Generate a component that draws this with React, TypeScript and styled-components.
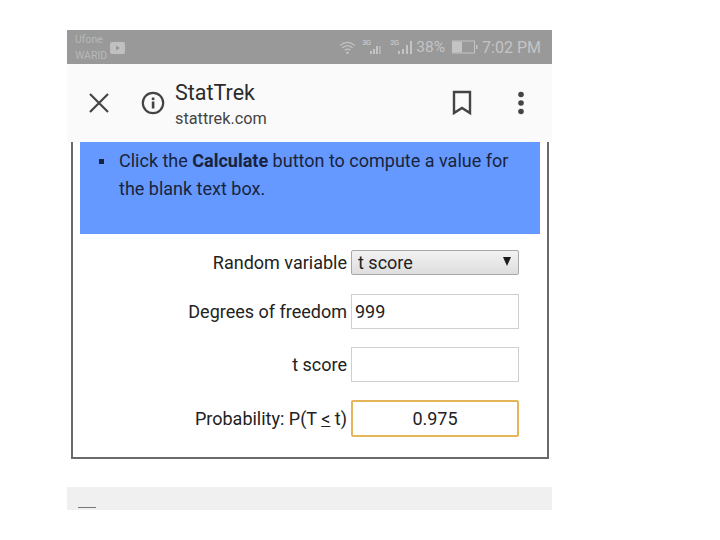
import React from "react";
import styled, { createGlobalStyle } from "styled-components";

const Global = createGlobalStyle`
  html, body { margin: 0; padding: 0; background: #fff; }
  body { font-family: Roboto, "Liberation Sans", sans-serif; }
`;

const Page = styled.div`
  width: 720px;
  height: 540px;
  padding: 30px 0 0 67px;
  box-sizing: border-box;
  overflow: hidden;
`;

const Phone = styled.div`
  width: 485px;
  height: 480px;
  display: flex;
  flex-direction: column;
`;

const StatusBar = styled.div`
  height: 34px;
  flex: none;
  background: #999999;
  color: #c4c4c4;
  display: flex;
  align-items: center;
  justify-content: space-between;
  padding: 0 11px 0 8px;
`;

const Carrier = styled.div`
  display: flex;
  align-items: center;
  gap: 3px;
`;

const CarrierText = styled.div`
  font-size: 10.5px;
  line-height: 16px;
  padding-top: 2px;
  color: #b8b8b8;
`;

const CarrierIcon = styled.svg`
  display: block;
  margin-top: 2px;
`;

const StatusRight = styled.div`
  display: flex;
  align-items: center;
`;

const StatusIcon = styled.svg<{ $left?: number }>`
  display: block;
  flex: none;
  margin-left: ${(p) => p.$left ?? 0}px;
`;

const NetTag = styled.span<{ $left: number }>`
  width: 7px;
  flex: none;
  margin-left: ${(p) => p.$left}px;
  margin-top: 1px;
  align-self: flex-start;
  font-size: 7.5px;
  line-height: 7px;
  letter-spacing: -0.5px;
  font-weight: 500;
  white-space: nowrap;
  color: #c8c8c8;
`;

const Percent = styled.span`
  font-size: 15.5px;
  margin: 0 7px 0 2px;
`;

const Clock = styled.span`
  font-size: 16px;
  margin-left: 4px;
`;

const Header = styled.div`
  height: 78px;
  flex: none;
  background: #fafafa;
  display: flex;
  align-items: center;
  padding: 0 27px 0 21px;
  box-sizing: border-box;
  color: #444;
`;

const TitleBlock = styled.div`
  margin-left: 10px;
  padding-top: 4px;
  flex: 1;
`;

const Title = styled.div`
  font-size: 21.5px;
  line-height: 28px;
  color: #2b2b2b;
`;

const Domain = styled.div`
  font-size: 16.3px;
  line-height: 24px;
  color: #444;
`;

const HeaderIcon = styled.svg`
  display: block;
  flex: none;
`;

const InfoIcon = styled(HeaderIcon)`
  margin-left: 31px;
`;

const BookmarkIcon = styled(HeaderIcon)`
  margin-right: 45px;
`;

const Content = styled.div`
  flex: 1;
  background: #fff;
  padding: 0 3px 0 4px;
`;

const Panel = styled.div`
  height: 317px;
  box-sizing: border-box;
  border: solid #6a6a6a;
  border-width: 0 2px 2px 2px;
  padding: 0 7px 0 7px;
`;

const Notice = styled.div`
  height: 92px;
  background: #6699ff;
  box-sizing: border-box;
  padding: 5px 24px 0 39px;
  font-size: 18px;
  line-height: 28px;
  color: #18233d;
  position: relative;
`;

const Bullet = styled.span`
  position: absolute;
  left: 19px;
  top: 17px;
  width: 5px;
  height: 5px;
  background: #18233d;
`;

const Form = styled.div`
  display: flex;
  flex-direction: column;
`;

const Row = styled.div<{ $top: number; $height: number }>`
  display: flex;
  align-items: center;
  justify-content: flex-end;
  margin-top: ${(p) => p.$top}px;
  height: ${(p) => p.$height}px;
  padding-right: 21px;
`;

const Label = styled.div`
  font-size: 18px;
  color: #222;
  margin-right: 4px;
  white-space: nowrap;
`;

const Under = styled.span`
  text-decoration: underline;
`;

const SelectBox = styled.div`
  width: 168px;
  height: 100%;
  box-sizing: border-box;
  border: 1px solid #a8a8a8;
  border-radius: 2px;
  background: linear-gradient(#f2f2f2, #dedede);
  display: flex;
  align-items: center;
  justify-content: space-between;
  padding: 0 7px 0 6px;
  font-size: 18px;
  color: #222;
`;

const Arrow = styled.span`
  width: 0;
  height: 0;
  border-left: 4px solid transparent;
  border-right: 4px solid transparent;
  border-top: 9px solid #1c1c1c;
  margin-top: -3px;
`;

const InputBox = styled.div<{ $focus?: boolean }>`
  width: 168px;
  height: 100%;
  box-sizing: border-box;
  border: ${(p) => (p.$focus ? "2px solid #e5b55a" : "1px solid #cfcfcf")};
  border-radius: ${(p) => (p.$focus ? "2px" : "0")};
  display: flex;
  align-items: center;
  justify-content: ${(p) => (p.$focus ? "center" : "flex-start")};
  padding: 0 3px;
  font-size: 18px;
  color: #222;
`;

const Footer = styled.div`
  height: 23px;
  margin-top: 28px;
  flex: none;
  background: #f0f0f0;
  padding: 20px 0 0 11px;
  box-sizing: border-box;
`;

const FooterRule = styled.div`
  width: 18px;
  height: 1px;
  background: #777;
`;

export default function App() {
  return (
    <Page>
      <Global />
      <Phone>
        <StatusBar>
          <Carrier>
            <CarrierText>
              Ufone
              <br />
              WARID
            </CarrierText>
            <CarrierIcon width="15" height="12" viewBox="0 0 15 12">
              <rect width="15" height="12" rx="2" fill="#c0c0c0" />
              <path d="M6 3.5 L10 6 L6 8.5 Z" fill="#999" />
            </CarrierIcon>
          </Carrier>
          <StatusRight>
            <StatusIcon width="17" height="15" viewBox="0 0 18 16" fill="none" stroke="#c4c4c4" strokeWidth="1.4">
              <path d="M1 6 Q9 -1 17 6" />
              <path d="M3.5 8.5 Q9 3.5 14.5 8.5" />
              <path d="M6 11 Q9 8.5 12 11" />
              <circle cx="9" cy="13.5" r="1.3" fill="#c4c4c4" stroke="none" />
            </StatusIcon>
            <NetTag $left={6}>3G</NetTag>
            <StatusIcon width="13" height="16" viewBox="0 0 13 16" fill="#c4c4c4">
              <rect x="1" y="12" width="2" height="3" />
              <rect x="4" y="10" width="2" height="5" />
              <rect x="7" y="7" width="2" height="8" />
              <rect x="10" y="7" width="2" height="8" opacity="0.6" />
            </StatusIcon>
            <NetTag $left={8}>2G</NetTag>
            <StatusIcon width="17" height="16" viewBox="0 0 17 16" fill="#c4c4c4">
              <rect x="1" y="12" width="2" height="3" />
              <rect x="5" y="10" width="2" height="5" />
              <rect x="9" y="6" width="2" height="9" />
              <rect x="13" y="2" width="2" height="13" />
            </StatusIcon>
            <Percent>38%</Percent>
            <StatusIcon width="26" height="14" viewBox="0 0 26 14">
              <rect x="0.5" y="1" width="22" height="12" fill="none" stroke="#c4c4c4" />
              <rect x="1" y="1.5" width="9" height="11" fill="#c4c4c4" />
              <rect x="24" y="5" width="1.5" height="4" fill="#c4c4c4" />
            </StatusIcon>
            <Clock>7:02 PM</Clock>
          </StatusRight>
        </StatusBar>
        <Header>
          <HeaderIcon width="22" height="22" viewBox="0 0 22 22" stroke="#444" strokeWidth="2.2" fill="none">
            <path d="M2 2 L20 20 M20 2 L2 20" />
          </HeaderIcon>
          <InfoIcon width="24" height="24" viewBox="0 0 24 24" fill="none">
            <circle cx="12" cy="12" r="10.2" stroke="#444" strokeWidth="2.2" />
            <rect x="10.8" y="10.5" width="2.6" height="7" fill="#444" />
            <rect x="10.8" y="6.5" width="2.6" height="2.6" fill="#444" />
          </InfoIcon>
          <TitleBlock>
            <Title>StatTrek</Title>
            <Domain>stattrek.com</Domain>
          </TitleBlock>
          <BookmarkIcon width="20" height="26" viewBox="0 0 20 26" fill="none" stroke="#444" strokeWidth="2.4">
            <path d="M2 2 H18 V23 L10 18 L2 23 Z" />
          </BookmarkIcon>
          <HeaderIcon width="8" height="24" viewBox="0 0 8 24" fill="#444">
            <circle cx="4" cy="3.5" r="2.8" />
            <circle cx="4" cy="12" r="2.8" />
            <circle cx="4" cy="20.5" r="2.8" />
          </HeaderIcon>
        </Header>
        <Content>
          <Panel>
            <Notice>
              <Bullet />
              Click the <b>Calculate</b> button to compute a value for the blank text box.
            </Notice>
            <Form>
              <Row $top={16} $height={25}>
                <Label>Random variable</Label>
                <SelectBox>
                  t score
                  <Arrow />
                </SelectBox>
              </Row>
              <Row $top={19} $height={35}>
                <Label>Degrees of freedom</Label>
                <InputBox>999</InputBox>
              </Row>
              <Row $top={18} $height={35}>
                <Label>t score</Label>
                <InputBox />
              </Row>
              <Row $top={18} $height={37}>
                <Label>
                  Probability: P(T <Under>&lt;</Under> t)
                </Label>
                <InputBox $focus>0.975</InputBox>
              </Row>
            </Form>
          </Panel>
        </Content>
        <Footer>
          <FooterRule />
        </Footer>
      </Phone>
    </Page>
  );
}
